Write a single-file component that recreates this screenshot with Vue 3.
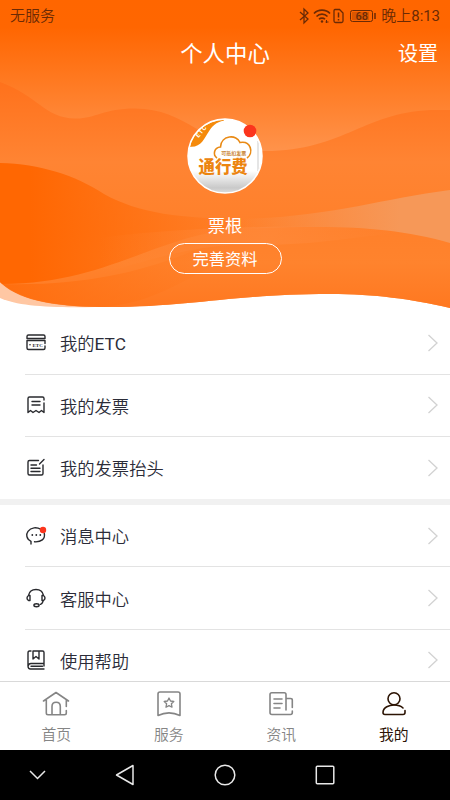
<script setup>
const groups = [
  [
    { id: 'etc', label: '我的', latin: 'ETC' },
    { id: 'invoice', label: '我的发票' },
    { id: 'title', label: '我的发票抬头' },
  ],
  [
    { id: 'message', label: '消息中心' },
    { id: 'service', label: '客服中心' },
    { id: 'help', label: '使用帮助' },
  ],
]
const tabs = [
  { id: 'home', label: '首页' },
  { id: 'star', label: '服务' },
  { id: 'news', label: '资讯' },
  { id: 'mine', label: '我的', active: true },
]
</script>

<template>
  <div class="screen">
    <header class="hero">
      <svg class="waves" viewBox="0 0 450 312" width="450" height="312">
        <defs>
          <linearGradient id="sky" gradientUnits="userSpaceOnUse" x1="0" y1="0" x2="0" y2="160">
            <stop offset="0" stop-color="#ff6600" />
            <stop offset=".17" stop-color="#ff6601" />
            <stop offset="1" stop-color="#ff9650" />
          </linearGradient>
          <linearGradient id="hill" gradientUnits="userSpaceOnUse" x1="0" y1="80" x2="0" y2="308">
            <stop offset="0" stop-color="#ff711b" />
            <stop offset=".36" stop-color="#ff8433" />
            <stop offset=".65" stop-color="#ff802a" />
            <stop offset=".8" stop-color="#ff832d" />
            <stop offset="1" stop-color="#ff7820" />
          </linearGradient>
          <linearGradient id="deep" gradientUnits="userSpaceOnUse" x1="30" y1="0" x2="250" y2="0">
            <stop offset="0" stop-color="#ff6702" />
            <stop offset="1" stop-color="#ff6702" stop-opacity="0" />
          </linearGradient>
          <linearGradient id="low" gradientUnits="userSpaceOnUse" x1="0" y1="0" x2="230" y2="0">
            <stop offset="0" stop-color="#ff6a08" stop-opacity=".8" />
            <stop offset="1" stop-color="#ff7418" stop-opacity="0" />
          </linearGradient>
          <linearGradient id="haze" gradientUnits="userSpaceOnUse" x1="240" y1="0" x2="400" y2="0">
            <stop offset="0" stop-color="#f69a5c" stop-opacity="0" />
            <stop offset="1" stop-color="#f69858" />
          </linearGradient>
          <linearGradient id="band" gradientUnits="userSpaceOnUse" x1="100" y1="0" x2="400" y2="0">
            <stop offset="0" stop-color="#ff9048" stop-opacity="0" />
            <stop offset=".55" stop-color="#ff9048" stop-opacity=".4" />
            <stop offset="1" stop-color="#ff9048" stop-opacity="0" />
          </linearGradient>
        </defs>
        <path d="M0 275V298C18 306 50 308 95 307V275Z" fill="#ffc7a3" />
        <path d="M0 0H450V308C410 299 376 294 330 294C235 294 190 307 110 307C60 307 22 302 0 282Z" fill="url(#sky)" />
        <path d="M0 82C38 96 45 118 75 118.500C95 119 103 108.500 135 108.500C190 108.500 205 151 265 151C345 151 365 110 437 110H450V308C410 299 376 294 330 294C235 294 190 307 110 307C60 307 22 302 0 282Z" fill="url(#hill)" />
        <path d="M0 163C40 164 75 175 104 194C138 213 180 219 250 219V228C160 231 110 284 2 284L0 282Z" fill="url(#deep)" />
        <path d="M2 284C80 286 135 273 180 256C210 244 230 237 250 235V252C190 270 170 300 105 307C60 307 22 302 2 284Z" fill="url(#low)" />
        <path d="M100 238C170 228 330 221 400 233C335 239 315 246 230 245C180 249 140 262 100 275Z" fill="url(#band)" />
        <path d="M240 219C330 217 380 199 450 190V243C390 226 335 225 240 229Z" fill="url(#haze)" />
      </svg>

      <div class="status">
        <span class="carrier">无服务</span>
        <div class="signals">
          <svg width="79" height="18" viewBox="0 0 79 18" fill="none" stroke="#6b2a05" stroke-width="1.300">
            <path d="M1 5l8 7-4 4V2l4 4-8 7" />
            <path d="M15 6.500C19 2 27 2 31 6.500M17.500 9.500C20.500 6.300 25.500 6.300 28.500 9.500M20 12.300C21.500 10.700 24.500 10.700 26 12.300" stroke-width="1.600" />
            <circle cx="23" cy="14.500" r="1.200" fill="#6b2a05" stroke="none" />
            <path d="M26.500 15h3M27.500 13v3" stroke-width="1" />
            <path d="M36 2.500H40.500L44 6V14Q44 15.500 42.500 15.500H36.500Q35 15.500 35 14V4Q35 2.500 36 2.500Z" />
            <path d="M39.500 5.500v5M39.500 12v1.500" stroke-width="1.500" />
            <rect x="51.500" y="3.500" width="22" height="11" rx="2" stroke-width="1" />
            <rect x="53" y="5" width="17" height="8" fill="#6b2a05" opacity=".25" stroke="none" />
            <path d="M76 6v6" stroke-width="1.500" />
            <text x="56.500" y="13" class="charge">68</text>
          </svg>
          <span class="clock">晚上<span class="latin">8:13</span></span>
        </div>
      </div>

      <div class="bar">
        <h1>个人中心</h1>
        <span class="settings">设置</span>
      </div>

      <div class="profile">
        <svg class="avatar" width="78" height="78" viewBox="0 0 78 78">
          <defs>
            <linearGradient id="face" x1="0" y1="0" x2="0" y2="1">
              <stop offset="0" stop-color="#fff" />
              <stop offset=".7" stop-color="#fff" />
              <stop offset=".93" stop-color="#c9c9c9" />
              <stop offset="1" stop-color="#ddd" />
            </linearGradient>
            <clipPath id="disc"><circle cx="39" cy="39" r="36.300" /></clipPath>
          </defs>
          <circle cx="39" cy="39" r="37" fill="url(#face)" />
          <g clip-path="url(#disc)">
            <path d="M0 29C14 33 18 22 22.500 15C26 9.500 30 5 38 3.500V0H0Z" fill="#f58a0b" />
            <path d="M72 24V54" stroke="#ddd" stroke-width="1.500" />
          </g>
          <circle cx="39" cy="39" r="37" fill="none" stroke="#fff" stroke-width="1.500" />
          <text class="corner" transform="translate(12.500 21) rotate(-50)">ETC</text>
          <path d="M31 41C26.500 38 28 30.500 34.500 30C35 18 51 17 54 25.500C65 23.500 68 36 61 41" fill="none" stroke="#e98a15" stroke-width="1.600" />
          <text class="caption" x="35.300" y="38" textLength="25">可抵扣发票</text>
          <text class="brand" x="12.600" y="56.300" textLength="49" lengthAdjust="spacingAndGlyphs">通行费</text>
          <circle cx="64" cy="14" r="6.300" fill="#fb351d" />
        </svg>
        <div class="name">票根</div>
        <button class="edit">完善资料</button>
      </div>
    </header>

    <main>
      <section v-for="(group, g) in groups" :key="g" class="group">
        <div v-for="item in group" :key="item.id" class="row">
          <svg class="icon" width="22" height="22" viewBox="0 0 22 22">
            <g v-if="item.id === 'etc'">
              <path d="M2 6.500V4.500Q2 3 3.500 3H18.500Q20 3 20 4.500V6.500ZM2 8.500H20V11.500M2 8.500V16Q2 17.500 3.500 17.500H18.500Q20 17.500 20 16V14" />
              <text class="mini" x="7.500" y="14.800">ETC</text>
              <circle cx="5" cy="12.800" r=".8" class="dot" />
            </g>
            <g v-else-if="item.id === 'invoice'">
              <path d="M19 9V18.500L16.500 16.500 14 18.500 11 16.500 8 18.500 5.500 16.500 3 18.500V4.500Q3 3 4.500 3H17.500Q19 3 19 4.500V6M7 7.500H15M7 11H15" />
            </g>
            <g v-else-if="item.id === 'title'">
              <path d="M13.500 3.500H4.500Q3 3.500 3 5V16.500Q3 18 4.500 18H16.500Q18 18 18 16.500V8M14.500 7L19 2.500M6 8H11.500M6 11.200H15M6 14.500H15" />
            </g>
            <g v-else-if="item.id === 'message'">
              <path d="M6 19V16.300C1 14 1 9 3 6.300C6 2.200 12 2 15.500 4.200M19.300 8.500C20.500 14 16 17.300 9.500 16.800" />
              <circle cx="7.300" cy="10" r=".9" class="dot" /><circle cx="11.300" cy="10" r=".9" class="dot" /><circle cx="15.300" cy="10" r=".9" class="dot" />
              <circle cx="18" cy="5" r="3.200" class="alert" />
            </g>
            <g v-else-if="item.id === 'service'">
              <path d="M3.500 8.500C5 .5 17 .5 18.500 8.500M5 8.500H3.500C1.500 10 1.500 12 3.500 13.500H5ZM17 8.500H18.500C20.500 10 20.500 12 18.500 13.500H17ZM18 14.500C17.500 16 16.500 17 15.500 17.300" />
              <ellipse cx="11.500" cy="18.200" rx="2.600" ry="1.500" />
            </g>
            <g v-else>
              <path d="M6 2H4.500Q3 2 3 4V17Q3 20 5.500 20H19M19 17V3.500Q19 2 17.500 2H8V10L11 7.500 14 10V2M3.200 17Q3.500 14.500 6 14.500H19M6 17.300H17.500" />
            </g>
          </svg>
          <span class="label">{{ item.label }}<span v-if="item.latin" class="latin">{{ item.latin }}</span></span>
          <svg class="chevron" width="12" height="20" viewBox="0 0 12 20">
            <path d="M1.500 2L10 10 1.500 18" />
          </svg>
        </div>
      </section>
    </main>

    <nav class="tabs">
      <div v-for="tab in tabs" :key="tab.id" class="tab" :class="{ active: tab.active }">
        <svg width="28" height="28" viewBox="0 0 28 28">
          <path v-if="tab.id === 'home'" d="M1.500 11L14 2.500 26.500 11M4.300 10V23Q4.300 24.700 6 24.700H22.500Q24.300 24.700 24.300 23V20.500M24.300 10V16.500M10 24.700V16.500C10 10.800 18.300 10.800 18.300 16.500V24.700" />
          <g v-else-if="tab.id === 'star'">
            <path d="M3 25.500V4Q3 2 5 2H23Q25 2 25 4V25.500Q14 20.300 3 25.500Z" />
            <path d="M14 8L15.500 11 18.800 11.500 16.400 13.800 17 17.200 14 15.600 11 17.200 11.600 13.800 9.200 11.500 12.500 11Z" stroke-width="1.300" />
          </g>
          <path v-else-if="tab.id === 'news'" d="M19 20V4.500Q19 2.800 17.300 2.800H4.700Q3 2.800 3 4.500V22.500Q3 24.500 5 24.500H23.500Q25.300 24.500 25.300 22.500V21M25.300 17.500V10Q25.300 8.500 23.500 8.500H19M7 9H15M7 13.500H15M7 18H13" />
          <g v-else>
            <circle cx="14" cy="8.800" r="6" />
            <path d="M25 20.500V22.500Q25 24.500 23 24.500H5Q3 24.500 3 22.500C3 17 9.500 15 14 15C18 15 21 16 23 18" />
          </g>
        </svg>
        <span>{{ tab.label }}</span>
      </div>
    </nav>

    <footer class="system">
      <svg width="450" height="50" viewBox="0 0 450 50" fill="none" stroke="#e8e8e8" stroke-width="1.500">
        <path d="M30 21L37.500 28.500 45 21" />
        <path d="M133 15.500V34.500L116.500 25Z" stroke-linejoin="round" />
        <circle cx="225" cy="25" r="9.800" />
        <rect x="316.300" y="16.300" width="17.500" height="17.500" rx="1" />
      </svg>
    </footer>
  </div>
</template>

<style>
body { margin: 0; background: #fff; }
</style>

<style scoped>
.screen {
  width: 450px;
  height: 800px;
  overflow: hidden;
  display: flex;
  flex-direction: column;
  background: #fff;
  font-family: Roboto, "Noto Sans CJK SC", sans-serif;
  font-weight: 350;
}
.latin { font-weight: 400; }
.hero {
  position: relative;
  height: 312px;
  flex: none;
  color: #fff;
}
.waves { position: absolute; inset: 0; display: block; }
.status, .bar, .profile { position: relative; }
.status {
  height: 32px;
  padding: 0 10px;
  display: flex;
  align-items: center;
  justify-content: space-between;
  box-sizing: border-box;
  font-size: 15px;
  line-height: 32px;
  color: #6b2a05;
}
.signals { display: flex; align-items: center; gap: 3px; }
.clock { font-size: 15px; letter-spacing: -0.050px; }
.charge { font: 500 11px Roboto, sans-serif; fill: #6b2a05; stroke: none; }
.bar {
  height: 44px;
  padding: 0 12px;
  display: grid;
  grid-template-columns: 1fr auto 1fr;
  align-items: center;
}
h1 { grid-column: 2; margin: 0; font-size: 22.4px; line-height: 44px; font-weight: 400; }
.settings { justify-self: end; font-size: 20px; line-height: 40px; font-weight: 400; }
.profile {
  padding-top: 41px;
  display: flex;
  flex-direction: column;
  align-items: center;
}
.avatar { display: block; }
.corner { font: 700 6px Roboto, sans-serif; fill: #fff; letter-spacing: 1px; }
.caption { font: 700 5px "Noto Sans CJK SC", sans-serif; fill: #c98535; }
.brand { font: 900 17px "Noto Sans CJK SC", sans-serif; fill: #ec8510; }
.name { margin-top: 18px; font-size: 17.300px; line-height: 26px; font-weight: 400; }
.edit {
  margin-top: 4px;
  width: 113px;
  height: 31px;
  padding: 2px 0 0;
  border: 1.500px solid #fff;
  border-radius: 16px;
  background: none;
  color: #fff;
  font: 400 16.300px/27px Roboto, "Noto Sans CJK SC", sans-serif;
}
main { height: 369px; flex: none; overflow: hidden; }
.group:first-child { padding-top: 0.600px; }
.group + .group { border-top: 6px solid #f1f1f1; }
.row {
  height: 62.400px;
  box-sizing: border-box;
  margin-left: 25px;
  padding-right: 11px;
  display: flex;
  align-items: center;
  border-bottom: 1px solid #e3e3e3;
}
.row:last-child { border-bottom-color: transparent; }
.group:first-child .row { padding-bottom: 1px; }
.group:first-child .row:last-child { height: 61.600px; padding-bottom: 0; }
.icon { flex: none; fill: none; stroke: #292a2e; stroke-width: 1.400; stroke-linecap: round; stroke-linejoin: round; }
.mini { font: 700 5px "Liberation Serif", serif; fill: #292a2e; stroke: none; }
.dot { fill: #292a2e; stroke: none; }
.alert { fill: #fb351d; stroke: none; }
.label { margin-left: 13px; flex: 1; font-size: 17.300px; color: #2b2c38; }
.chevron { fill: none; stroke: #d2d2d2; stroke-width: 1.300; }
.tabs {
  height: 69px;
  flex: none;
  box-sizing: border-box;
  border-top: 1.500px solid #d9d9d9;
  display: grid;
  grid-template-columns: repeat(4, 1fr);
}
.tab {
  display: flex;
  flex-direction: column;
  align-items: center;
  padding-top: 8px;
  color: #858585;
  font-size: 14.800px;
}
.tab span { line-height: 22px; margin-top: 6px; }
.tab svg { flex: none; fill: none; stroke: currentColor; stroke-width: 1.600; stroke-linecap: round; stroke-linejoin: round; }
.tab.active { color: #2c1404; font-weight: 400; }
.system { height: 50px; flex: none; background: #000; }
.system svg { display: block; }
</style>
